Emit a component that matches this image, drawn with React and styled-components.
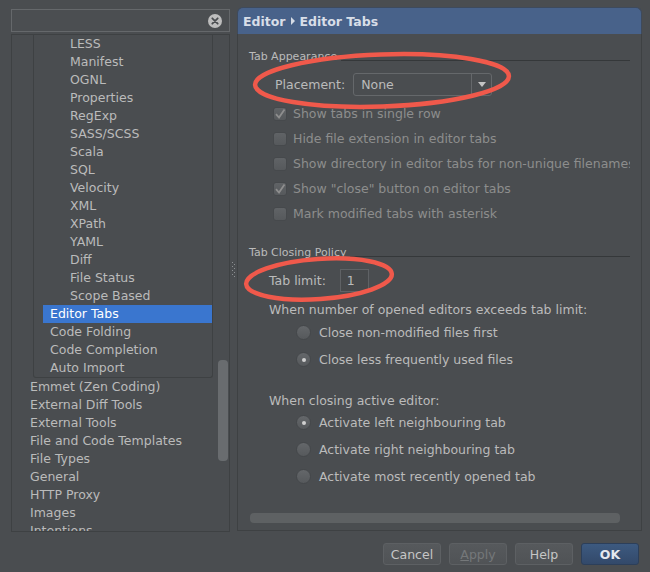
import React from "react";
import styled, { createGlobalStyle } from "styled-components";

const GlobalStyle = createGlobalStyle`
  html, body {
    margin: 0;
    padding: 0;
    background: #4a4d50;
    overflow: hidden;
  }
`;

const treeItems = [
  { label: "LESS", level: 3, group: true },
  { label: "Manifest", level: 3, group: true },
  { label: "OGNL", level: 3, group: true },
  { label: "Properties", level: 3, group: true },
  { label: "RegExp", level: 3, group: true },
  { label: "SASS/SCSS", level: 3, group: true },
  { label: "Scala", level: 3, group: true },
  { label: "SQL", level: 3, group: true },
  { label: "Velocity", level: 3, group: true },
  { label: "XML", level: 3, group: true },
  { label: "XPath", level: 3, group: true },
  { label: "YAML", level: 3, group: true },
  { label: "Diff", level: 3, group: true },
  { label: "File Status", level: 3, group: true },
  { label: "Scope Based", level: 3, group: true },
  { label: "Editor Tabs", level: 2, group: true, selected: true },
  { label: "Code Folding", level: 2, group: true },
  { label: "Code Completion", level: 2, group: true },
  { label: "Auto Import", level: 2, group: true },
  { label: "Emmet (Zen Coding)", level: 1 },
  { label: "External Diff Tools", level: 1 },
  { label: "External Tools", level: 1 },
  { label: "File and Code Templates", level: 1 },
  { label: "File Types", level: 1 },
  { label: "General", level: 1 },
  { label: "HTTP Proxy", level: 1 },
  { label: "Images", level: 1 },
  { label: "Intentions", level: 1 },
];

const appearanceOptions = [
  { label: "Show tabs in single row", checked: true },
  { label: "Hide file extension in editor tabs" },
  { label: "Show directory in editor tabs for non-unique filenames" },
  { label: 'Show "close" button on editor tabs', checked: true },
  { label: "Mark modified tabs with asterisk" },
];

const App = () => {
  const groupRows = treeItems.filter((i) => i.group);
  const topRows = treeItems.filter((i) => !i.group);

  return (
    <Window>
      <GlobalStyle />
      <Main>
        <LeftPane>
          <SearchField>
            <ClearIcon width="14" height="14" viewBox="0 0 14 14">
              <circle cx="7" cy="7" r="7" fill="#bdbdbd" />
              <path
                d="M4.3 4.3 L9.7 9.7 M9.7 4.3 L4.3 9.7"
                stroke="#4a4d50"
                strokeWidth="1.8"
                strokeLinecap="round"
              />
            </ClearIcon>
          </SearchField>
          <Tree>
            <Group>
              {groupRows.map((item) => (
                <TreeRow
                  key={item.label}
                  $indent={(item.level - 2) * 20 + 9}
                  $selected={item.selected}
                >
                  {item.label}
                </TreeRow>
              ))}
            </Group>
            {topRows.map((item) => (
              <TreeRow key={item.label} $indent={11}>
                {item.label}
              </TreeRow>
            ))}
            <ScrollThumb />
          </Tree>
        </LeftPane>

        <Splitter>
          <svg width="5" height="15" viewBox="0 0 5 15">
            {[0, 2, 4, 6, 8, 10, 12, 14].map((y) => (
              <rect key={y} x={y % 4 === 0 ? 1 : 3} y={y} width="1" height="1" fill="#8c8f92" />
            ))}
          </svg>
        </Splitter>

        <RightPane>
          <Header>
            <span>Editor</span>
            <Crumb width="4" height="8" viewBox="0 0 4 8">
              <path d="M0 0 L4 4 L0 8 Z" fill="#d5dbe5" />
            </Crumb>
            <span>Editor Tabs</span>
          </Header>
          <Panel>
            <SectionTitle $top={15}>
              <span>Tab Appearance</span>
              <Rule />
            </SectionTitle>

            <FieldRow $top={10} $indent={26}>
              <FieldLabel>Placement:</FieldLabel>
              <Combo>
                <ComboValue>None</ComboValue>
                <ComboArrow>
                  <svg width="8" height="5" viewBox="0 0 8 5">
                    <path d="M0 0 L8 0 L4 5 Z" fill="#c4c4c4" />
                  </svg>
                </ComboArrow>
              </Combo>
            </FieldRow>

            <OptionList $top={5}>
              {appearanceOptions.map((opt) => (
                <CheckRow key={opt.label}>
                  <CheckBox>
                    {opt.checked && (
                      <svg width="14" height="14" viewBox="0 0 14 14">
                        <path
                          d="M3 7.2 L6 10.5 L11.5 2.5"
                          stroke="#8e8e8e"
                          strokeWidth="1.8"
                          fill="none"
                        />
                      </svg>
                    )}
                  </CheckBox>
                  <DimText>{opt.label}</DimText>
                </CheckRow>
              ))}
            </OptionList>

            <SectionTitle $top={19}>
              <span>Tab Closing Policy</span>
              <Rule />
            </SectionTitle>

            <FieldRow $top={10} $indent={20}>
              <FieldLabel>Tab limit:</FieldLabel>
              <NumberInput>1</NumberInput>
            </FieldRow>

            <Caption $top={10}>When number of opened editors exceeds tab limit:</Caption>
            <OptionList $top={1}>
              <RadioRow>
                <Radio />
                <span>Close non-modified files first</span>
              </RadioRow>
              <RadioRow>
                <Radio $on />
                <span>Close less frequently used files</span>
              </RadioRow>
            </OptionList>

            <Caption $top={20}>When closing active editor:</Caption>
            <OptionList $top={0}>
              <RadioRow>
                <Radio $on />
                <span>Activate left neighbouring tab</span>
              </RadioRow>
              <RadioRow>
                <Radio />
                <span>Activate right neighbouring tab</span>
              </RadioRow>
              <RadioRow>
                <Radio />
                <span>Activate most recently opened tab</span>
              </RadioRow>
            </OptionList>

            <HScroll />
          </Panel>
        </RightPane>
      </Main>

      <Footer>
        <Button>Cancel</Button>
        <Button disabled>
          <u>A</u>pply
        </Button>
        <Button>Help</Button>
        <Button $primary>OK</Button>
      </Footer>

      <Marks width="650" height="572" viewBox="0 0 650 572">
        <ellipse
          cx="382"
          cy="80.5"
          rx="127"
          ry="26"
          transform="rotate(-2 382 80.5)"
          fill="none"
          stroke="#f0594b"
          strokeWidth="4.5"
        />
        <ellipse
          cx="319"
          cy="279"
          rx="73"
          ry="20"
          transform="rotate(-4 319 279)"
          fill="none"
          stroke="#f0594b"
          strokeWidth="4.5"
        />
      </Marks>
    </Window>
  );
};

const Window = styled.div`
  position: relative;
  width: 650px;
  height: 572px;
  box-sizing: border-box;
  padding-top: 7px;
  display: flex;
  flex-direction: column;
  font-family: "DejaVu Sans", "Liberation Sans", sans-serif;
  font-size: 12px;
  color: #bbbbbb;
`;

const Main = styled.div`
  display: flex;
  height: 525px;
`;

const LeftPane = styled.div`
  width: 219px;
  margin-left: 11px;
  padding-top: 2px;
  display: flex;
  flex-direction: column;
  gap: 2px;
`;

const SearchField = styled.div`
  height: 23px;
  box-sizing: border-box;
  border: 1px solid #65686b;
  background: #4b4e51;
  display: flex;
  align-items: center;
  justify-content: flex-end;
  padding-right: 7px;
`;

const ClearIcon = styled.svg`
  display: block;
`;

const Tree = styled.div`
  position: relative;
  flex: 1;
  border: 1px solid #3e4143;
  overflow: hidden;
  font-size: 12.5px;
`;

const Group = styled.div`
  margin-left: 21px;
  width: 180px;
  box-sizing: border-box;
  border: 1px solid #3e4143;
  border-top: none;
  border-radius: 0 0 3px 3px;
`;

const TreeRow = styled.div`
  height: 18px;
  line-height: 18px;
  margin-left: ${(p) => p.$indent}px;
  padding-left: 7px;
  white-space: nowrap;
  background: ${(p) => (p.$selected ? "#3a76cf" : "transparent")};
  color: ${(p) => (p.$selected ? "#ffffff" : "#bbbbbb")};
`;

const ScrollThumb = styled.div`
  position: absolute;
  left: 206px;
  top: 325px;
  width: 10px;
  height: 101px;
  border-radius: 4px;
  background: #696c6f;
`;

const Splitter = styled.div`
  width: 7px;
  display: flex;
  align-items: center;
  justify-content: center;
`;

const RightPane = styled.div`
  width: 405px;
  display: flex;
  flex-direction: column;
`;

const Header = styled.div`
  height: 27px;
  box-sizing: border-box;
  background: #48628a;
  border: 1px solid #3e4a5c;
  border-bottom: none;
  border-radius: 6px 6px 0 0;
  display: flex;
  align-items: center;
  padding-left: 5px;
  gap: 5px;
  font-weight: bold;
  font-size: 12.5px;
  color: #d8dee8;
`;

const Crumb = styled.svg`
  display: block;
`;

const Panel = styled.div`
  height: 497px;
  box-sizing: border-box;
  border: 1px solid #3e4143;
  border-top: none;
  padding: 0 11px;
  display: flex;
  flex-direction: column;
  font-size: 12.5px;
`;

const SectionTitle = styled.div`
  margin-top: ${(p) => p.$top}px;
  height: 14px;
  display: flex;
  align-items: center;
  gap: 4px;
  font-size: 11px;
  white-space: nowrap;
`;

const Rule = styled.div`
  flex: 1;
  height: 1px;
  background: #35383a;
  transform: translateY(4px);
`;

const FieldRow = styled.div`
  margin-top: ${(p) => p.$top}px;
  padding-left: ${(p) => p.$indent}px;
  display: flex;
  align-items: center;
  gap: 7px;
`;

const FieldLabel = styled.span`
  color: #bbbbbb;
`;

const Combo = styled.div`
  width: 139px;
  height: 23px;
  box-sizing: border-box;
  border: 1px solid #65686b;
  border-radius: 3px;
  display: flex;
  margin-left: 1px;
`;

const ComboValue = styled.div`
  flex: 1;
  padding-left: 7px;
  line-height: 22px;
`;

const ComboArrow = styled.div`
  width: 19px;
  border-left: 1px solid #65686b;
  display: flex;
  align-items: center;
  justify-content: center;
`;

const OptionList = styled.div`
  margin-top: ${(p) => p.$top}px;
  display: flex;
  flex-direction: column;
`;

const CheckRow = styled.div`
  height: 25px;
  padding-left: 24px;
  display: flex;
  align-items: center;
  gap: 6px;
  white-space: nowrap;
  overflow: hidden;
`;

const CheckBox = styled.div`
  width: 14px;
  height: 14px;
  flex: none;
  box-sizing: border-box;
  border-radius: 3px;
  border: 1px solid #46494c;
  background: linear-gradient(#606366, #56595c);
  svg {
    display: block;
    margin: -1px;
  }
`;

const DimText = styled.span`
  color: #8d8d8d;
`;

const NumberInput = styled.div`
  width: 29px;
  height: 23px;
  box-sizing: border-box;
  border: 1px solid #5f6265;
  background: #46494b;
  padding-left: 6px;
  line-height: 22px;
  margin-left: 7px;
`;

const Caption = styled.div`
  margin-top: ${(p) => p.$top}px;
  height: 16px;
  line-height: 16px;
  padding-left: 20px;
  white-space: nowrap;
`;

const RadioRow = styled.div`
  height: 27px;
  padding-left: 47px;
  display: flex;
  align-items: center;
  gap: 8px;
  white-space: nowrap;
`;

const Radio = styled.div`
  width: 15px;
  height: 15px;
  flex: none;
  box-sizing: border-box;
  border-radius: 50%;
  border: 1px solid #45484b;
  background: linear-gradient(#64676a, #56595c);
  display: flex;
  align-items: center;
  justify-content: center;
  &::after {
    content: "";
    width: 4px;
    height: 4px;
    border-radius: 50%;
    background: #d0d0d0;
    display: ${(p) => (p.$on ? "block" : "none")};
  }
`;

const HScroll = styled.div`
  margin: auto 10px 7px 1px;
  height: 10px;
  border-radius: 4px;
  background: #5e6163;
`;

const Footer = styled.div`
  margin-top: 11px;
  padding-right: 11px;
  display: flex;
  justify-content: flex-end;
  gap: 8px;
`;

const Button = styled.button`
  width: 58px;
  height: 22px;
  padding: 0;
  border-radius: 3px;
  font-family: "DejaVu Sans", "Liberation Sans", sans-serif;
  font-size: 12.5px;
  border: 1px solid ${(p) => (p.$primary ? "#2c3f5a" : "#5d6063")};
  background: ${(p) =>
    p.$primary
      ? "linear-gradient(#3d5a80, #33496a)"
      : "linear-gradient(#56595c, #505356)"};
  color: ${(p) => (p.$primary ? "#e4e8ee" : p.disabled ? "#75787a" : "#c6c6c6")};
  font-weight: ${(p) => (p.$primary ? "bold" : "normal")};
  u {
    text-decoration-thickness: 1px;
  }
`;

const Marks = styled.svg`
  position: absolute;
  left: 0;
  top: 0;
  pointer-events: none;
`;

export default App;
